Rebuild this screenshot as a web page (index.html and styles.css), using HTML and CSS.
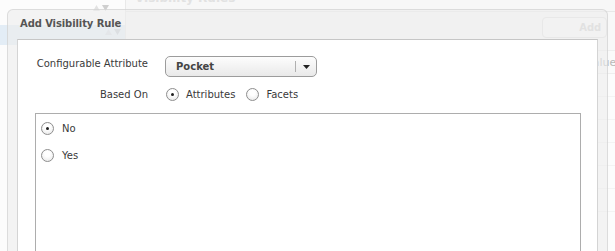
FILE: index.html
```html
<!DOCTYPE html>
<html lang="en">
<head>
    <meta charset="UTF-8">
    <title>Add Visibility Rule</title>
    <link rel="stylesheet" href="styles.css">
</head>
<body>
    <!-- page behind the modal window -->
    <div class="app">
        <div class="side">
            <div class="side-head">
                <svg class="sort" width="16" height="8" viewBox="0 0 16 8"><path d="M0 7 L3.5 1 L7 7 Z" fill="#e2e2e2"/><path d="M9 1 L16 1 L12.5 7 Z" fill="#cfcfcf"/></svg>
            </div>
            <div class="side-row sel">
                <svg class="sort" width="16" height="8" viewBox="0 0 16 8"><path d="M0 7 L3.5 1 L7 7 Z" fill="#d6dde3"/><path d="M9 1 L16 1 L12.5 7 Z" fill="#c4cbd1"/></svg>
            </div>
        </div>
        <div class="main">
            <div class="main-title"><span>Visibility Rules</span></div>
            <div class="main-bar"><button class="add-btn">Add</button></div>
            <div class="grid-head"><span class="col-name"></span><span class="col-val">Value</span></div>
            <div class="grid-row"></div>
            <div class="grid-row"></div>
            <div class="grid-row"></div>
            <div class="grid-row"></div>
            <div class="grid-row"></div>
            <div class="grid-row"></div>
        </div>
    </div>

    <div class="window">
        <div class="win-head">Add Visibility Rule</div>
        <div class="win-body">
            <div class="form-row first">
                <label class="lbl" for="attr">Configurable Attribute</label>
                <div class="combo" id="attr">
                    <span class="combo-val">Pocket</span>
                    <span class="combo-trig"><svg width="7" height="4" viewBox="0 0 7 4"><path d="M0 0 L7 0 L3.5 4 Z" fill="#222"/></svg></span>
                </div>
            </div>
            <div class="form-row second">
                <span class="lbl">Based On</span>
                <div class="radio-group">
                    <label class="radio"><span class="rad checked"></span>Attributes</label>
                    <label class="radio"><span class="rad"></span>Facets</label>
                </div>
            </div>
            <div class="values">
                <label class="radio"><span class="rad checked"></span>No</label>
                <label class="radio"><span class="rad"></span>Yes</label>
            </div>
        </div>
    </div>
</body>
</html>
```

FILE: styles.css
```css
html, body {
    margin: 0;
    padding: 0;
}
body {
    width: 615px;
    height: 251px;
    overflow: hidden;
    position: relative;
    background: #fcfcfc;
    font-family: "DejaVu Sans", Verdana, sans-serif;
    font-size: 10px;
    color: #3a3a3a;
}

.app {
    display: flex;
    height: 251px;
}
.side {
    width: 137px;
    border-right: 1px solid #e9e9e9;
}
.side-head {
    height: 25px;
    display: flex;
    justify-content: flex-end;
    align-items: flex-start;
    padding: 4px 16px 0 0;
    box-sizing: border-box;
}
.side-row {
    height: 20px;
    width: 125px;
    display: flex;
    justify-content: flex-end;
    align-items: flex-start;
    padding: 3px 4px 0 0;
    box-sizing: border-box;
}
.side-row.sel {
    background: #e3edf6;
}
.main {
    flex: 1;
}
.main-title {
    height: 11px;
    border-bottom: 1px solid #e8e8e8;
    background: #f7f7f7;
    overflow: hidden;
    padding-left: 9px;
}
.main-title span {
    display: block;
    margin-top: -9px;
    font-size: 12px;
    font-weight: bold;
    color: #e2e2e2;
    line-height: 14px;
}
.main-bar {
    height: 39px;
    display: flex;
    justify-content: flex-end;
    align-items: flex-start;
    padding: 5px 9px 0 0;
    box-sizing: border-box;
    background: #f8f8f8;
    border-bottom: 1px solid #eeeeee;
}
.add-btn {
    width: 65px;
    height: 21px;
    border: 1px solid #e0e0e0;
    border-radius: 4px;
    background: #f9f9f9;
    font-family: inherit;
    font-size: 10px;
    font-weight: bold;
    color: #d0d0d0;
    text-align: right;
    padding: 0 5px 0 0;
}
.grid-head {
    height: 22px;
    display: flex;
    align-items: center;
    border-bottom: 1px solid #eeeeee;
    background: #fafafa;
}
.col-name {
    flex: 0 0 460px;
}
.col-val {
    color: #b8b8b8;
    font-size: 11px;
    white-space: nowrap;
}
.grid-row {
    height: 22px;
    border-bottom: 1px solid #f3f3f3;
}

/* modal window */
.window {
    position: absolute;
    left: 7px;
    top: 9px;
    width: 601px;
    height: 270px;
    box-sizing: border-box;
    border: 1px solid rgba(195, 195, 195, 0.5);
    border-radius: 6px 6px 0 0;
    background: rgba(236, 236, 236, 0.6);
}
.win-head {
    height: 29px;
    line-height: 27px;
    padding-left: 12px;
    font-weight: bold;
    color: #555;
    letter-spacing: -0.1px;
}
.win-body {
    margin: 0 9px;
    height: 240px;
    background: #fff;
    border: 1px solid #d4d4d4;
    border-top-color: #c6c6c6;
}
.form-row {
    display: flex;
    align-items: flex-start;
}
.form-row.first {
    margin-top: 16px;
}
.form-row.second {
    margin-top: 9px;
    align-items: center;
    height: 17px;
}
.lbl {
    width: 130px;
    text-align: right;
    margin-right: 17px;
    line-height: 16px;
    white-space: nowrap;
}
.combo {
    width: 152px;
    height: 21px;
    box-sizing: border-box;
    border: 1px solid #9c9c9c;
    border-radius: 5px;
    background: linear-gradient(#fdfdfd, #e9e9e9);
    display: flex;
    align-items: center;
}
.combo-val {
    flex: 1;
    padding-left: 10px;
    font-weight: bold;
    color: #444;
}
.combo-trig {
    width: 20px;
    height: 11px;
    border-left: 1px solid #b0b0b0;
    display: flex;
    align-items: center;
    justify-content: center;
}
.radio-group {
    display: flex;
    align-items: center;
    margin-left: 1px;
}
.radio {
    display: flex;
    align-items: center;
    gap: 7px;
    margin-right: 11px;
    line-height: 13px;
}
.rad {
    width: 13px;
    height: 13px;
    box-sizing: border-box;
    border: 1px solid #8e8e8e;
    border-radius: 50%;
    background: radial-gradient(circle at 50% 35%, #ffffff 30%, #e4e4e4 100%);
    display: flex;
    align-items: center;
    justify-content: center;
}
.rad.checked::after {
    content: "";
    width: 3px;
    height: 3px;
    border-radius: 50%;
    background: #1e1e1e;
}
.values {
    margin: 10px 16px 0 17px;
    height: 200px;
    border: 1px solid #adadad;
    padding: 8px 0 0 5px;
    display: flex;
    flex-direction: column;
    gap: 14px;
}
.values .radio {
    gap: 8px;
}
```
